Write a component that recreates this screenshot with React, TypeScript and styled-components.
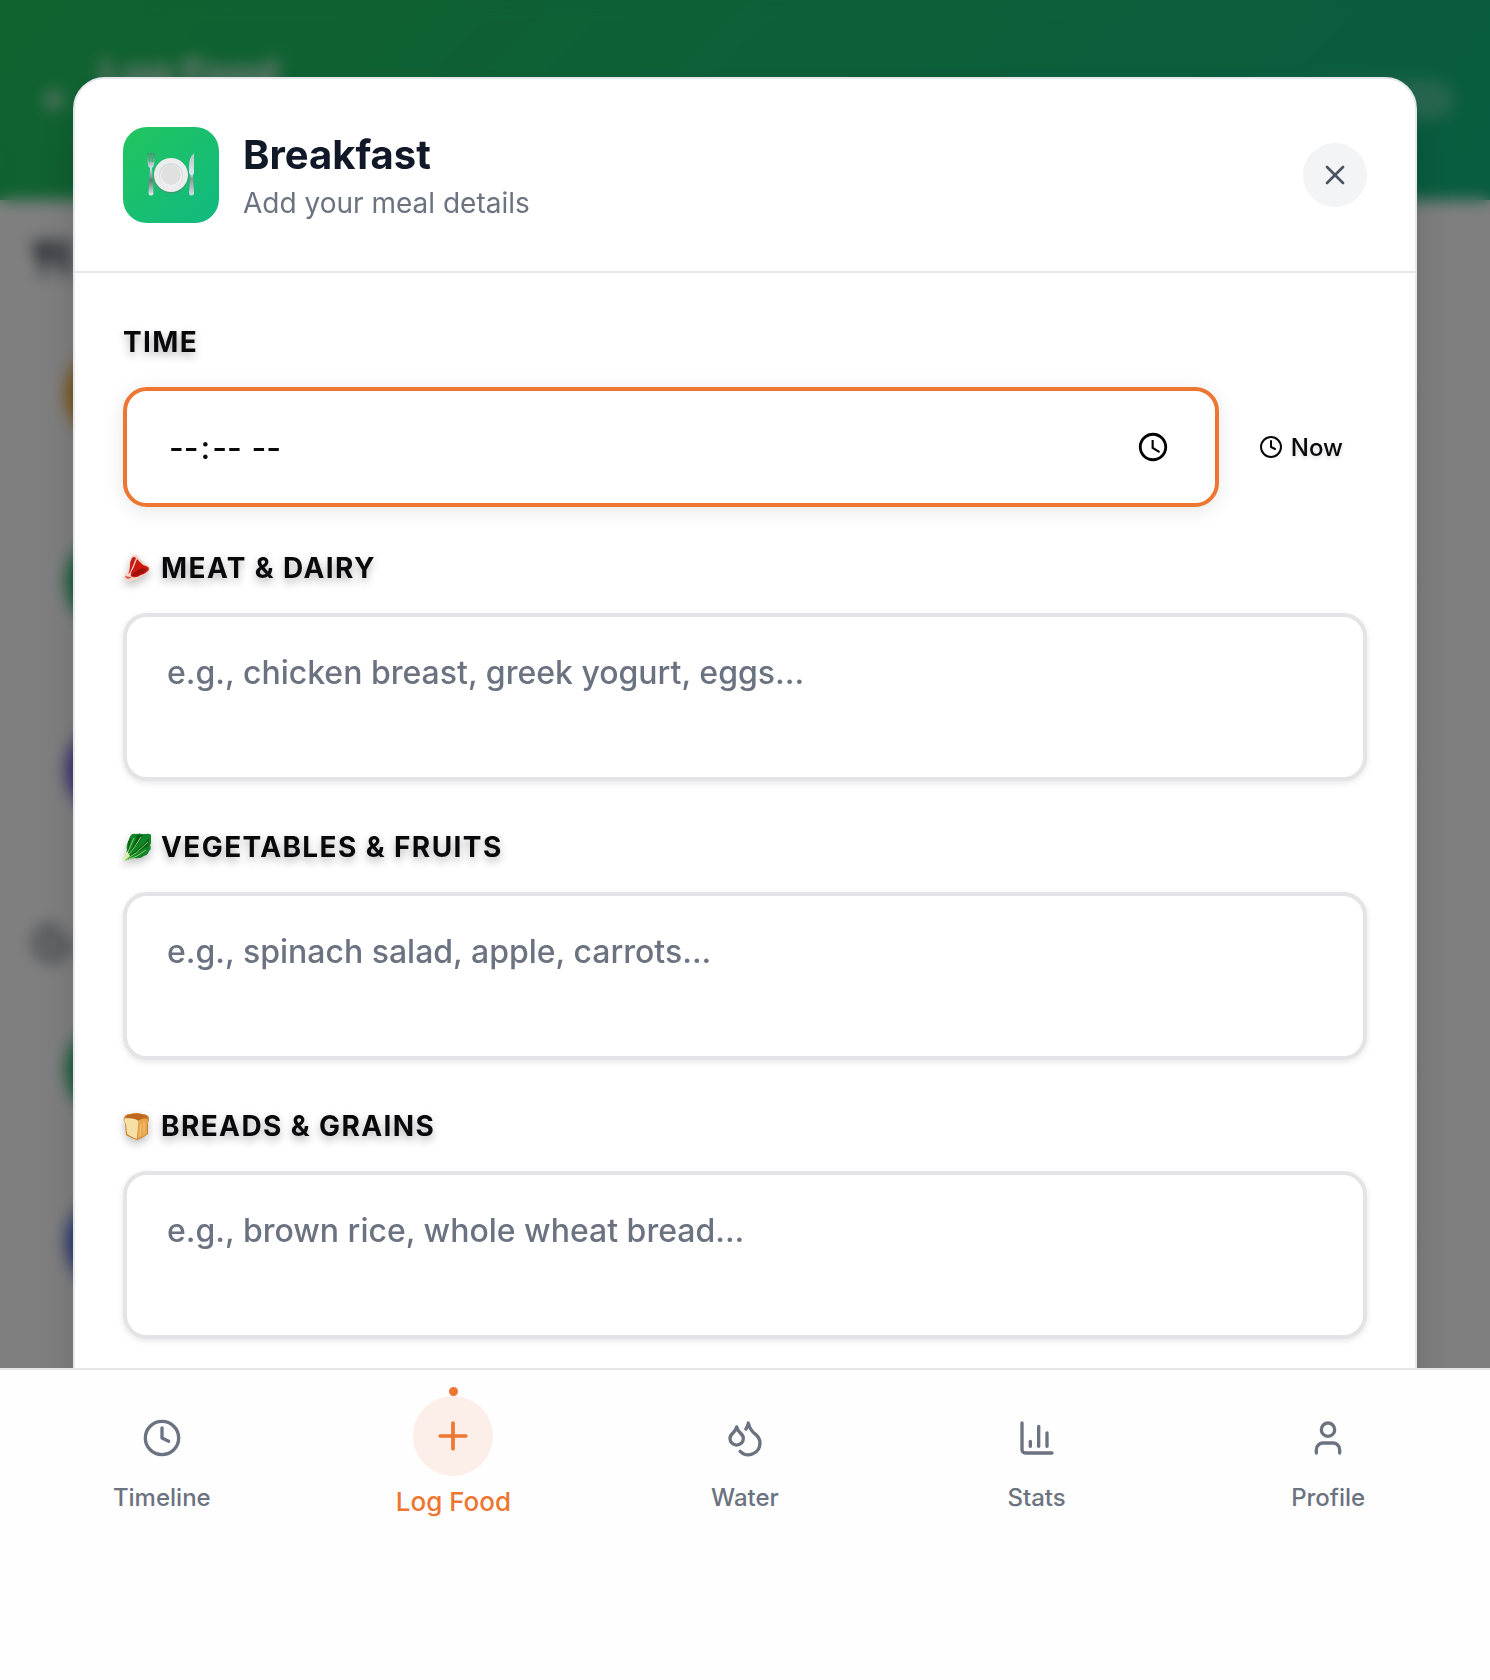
import React from "react";
import styled, { createGlobalStyle } from "styled-components";
import {
  ArrowLeft,
  ChartColumn,
  ChevronRight,
  Clock,
  Cookie,
  Droplets,
  Plus,
  User,
  Utensils,
  X,
} from "lucide-react";

const GlobalStyle = createGlobalStyle`
  *, *::before, *::after { box-sizing: border-box; }
  body {
    margin: 0;
    background: #fff;
    color: #09090b;
    font-family: Inter, "Liberation Sans", sans-serif;
    -webkit-font-smoothing: antialiased;
  }
  button, input, textarea { font: inherit; color: inherit; }
  h1, h2, p { margin: 0; }
`;

/* ---------- page behind the dialog ---------- */

const Page = styled.div`
  height: 100vh;
  overflow: hidden;
`;

const PageHeader = styled.header`
  display: flex;
  align-items: center;
  gap: 28px;
  height: 200px;
  padding: 0 36px 0 40px;
  color: #fff;
  background: linear-gradient(135deg, #22c55e, #10b981);
`;

const PageTitle = styled.div`
  flex: 1;
  padding-bottom: 52px;
  font-size: 40px;
  font-weight: 700;
  line-height: 48px;
`;

const HeaderPill = styled.div`
  width: 144px;
  height: 40px;
  border-radius: 20px;
  background: rgba(255, 255, 255, 0.25);
`;

const PageSection = styled.section<{ $top: number }>`
  display: flex;
  flex-direction: column;
  gap: 16px;
  padding: ${(p) => p.$top}px 32px 0;
`;

const SectionTitle = styled.div<{ $color: string }>`
  display: flex;
  align-items: center;
  height: 50px;
  margin-bottom: 8px;
  color: ${(p) => p.$color};
`;

const EntryCard = styled.div<{ $height: number }>`
  display: flex;
  align-items: center;
  justify-content: space-between;
  height: ${(p) => p.$height}px;
  padding: 0 32px;
  border: 2px solid #f8f8f9;
  border-radius: 32px;
  color: #9ca3af;
`;

const EntryDot = styled.div<{ $color: string }>`
  width: 96px;
  height: 96px;
  border-radius: 50%;
  background: ${(p) => p.$color};
`;

/* ---------- dialog ---------- */

const Overlay = styled.div`
  position: fixed;
  inset: 0;
  display: flex;
  justify-content: center;
  padding: 77px 32px;
  background: rgba(0, 0, 0, 0.5);
  backdrop-filter: blur(8px);
`;

const Dialog = styled.div`
  width: 100%;
  max-width: 1344px;
  overflow: hidden;
  background: #fff;
  border: 2px solid #e5e7eb;
  border-radius: 32px;
  box-shadow: 0 25px 50px -12px rgba(0, 0, 0, 0.25);
`;

const DialogHeader = styled.div`
  display: flex;
  align-items: center;
  gap: 24px;
  padding: 48px;
  border-bottom: 2px solid #e5e7eb;
`;

const MealBadge = styled.div`
  display: grid;
  place-items: center;
  width: 96px;
  height: 96px;
  border-radius: 24px;
  background: linear-gradient(135deg, #22c55e, #10b981);
`;

const Heading = styled.div`
  flex: 1;
`;

const Title = styled.h1`
  font-size: 40px;
  font-weight: 700;
  line-height: 56px;
  color: #111827;
`;

const Subtitle = styled.p`
  font-size: 28px;
  line-height: 40px;
  color: #6b7280;
`;

const CloseButton = styled.button`
  display: grid;
  place-items: center;
  width: 64px;
  height: 64px;
  padding: 0;
  border: 0;
  border-radius: 50%;
  background: #f3f4f6;
  color: #4b5563;
`;

const Form = styled.form`
  display: flex;
  flex-direction: column;
  gap: 40px;
  padding: 48px;
`;

const Field = styled.div<{ $multiline?: boolean }>`
  display: flex;
  flex-direction: column;
  gap: 24px;
  padding-bottom: ${(p) => (p.$multiline ? 5 : 0)}px;
`;

const Label = styled.label`
  display: flex;
  align-items: center;
  gap: 10px;
  font-size: 28px;
  font-weight: 700;
  line-height: 42px;
  letter-spacing: 0.05em;
  text-transform: uppercase;
  text-shadow: 0 4px 8px rgba(0, 0, 0, 0.3);
  svg {
    filter: drop-shadow(0 4px 4px rgba(0, 0, 0, 0.25));
  }
`;

const TimeRow = styled.div`
  display: flex;
  align-items: center;
  gap: 16px;
`;

const TimeInput = styled.input`
  flex: 1;
  min-width: 0;
  height: 120px;
  padding: 0 40px;
  border: 4px solid #ed7632;
  border-radius: 24px;
  outline: 0;
  background: #fff;
  font-size: 32px;
  font-weight: 500;
  box-shadow: 0 4px 20px rgba(0, 0, 0, 0.1);
  &::-webkit-datetime-edit-hour-field,
  &::-webkit-datetime-edit-minute-field,
  &::-webkit-datetime-edit-ampm-field {
    padding: 0 2px;
  }
  &::-webkit-calendar-picker-indicator {
    margin-right: 2px;
  }
`;

const NowButton = styled.button`
  display: flex;
  align-items: center;
  gap: 8px;
  height: 64px;
  padding: 0 24px;
  border: 0;
  background: transparent;
  font-size: 24px;
  font-weight: 500;
  text-shadow: 0 2px 4px rgba(0, 0, 0, 0.15);
`;

const TextArea = styled.textarea`
  display: block;
  width: 100%;
  height: 168px;
  padding: 32px 40px;
  border: 4px solid #e4e4e7;
  border-radius: 24px;
  outline: 0;
  resize: none;
  background: #fff;
  font-size: 32px;
  font-weight: 500;
  line-height: 48px;
  box-shadow: 0 2px 6px rgba(0, 0, 0, 0.1);
  &::placeholder {
    color: #6b7280;
    opacity: 1;
  }
`;

/* ---------- bottom navigation ---------- */

const NavBar = styled.nav`
  position: fixed;
  inset: auto 0 0;
  display: flex;
  padding: 24px 16px 158px;
  border-top: 2px solid #e5e7eb;
  background: #fefefe;
`;

const NavItem = styled.a<{ $active?: boolean }>`
  flex: 1;
  display: flex;
  flex-direction: column;
  align-items: center;
  justify-content: center;
  gap: 8px;
  height: 128px;
  font-size: ${(p) => (p.$active ? 26 : 24)}px;
  line-height: ${(p) => (p.$active ? 36 : 32)}px;
  font-weight: 500;
  color: ${(p) => (p.$active ? "#ed7632" : "#6b7280")};
  text-decoration: none;
`;

const NavIcon = styled.span<{ $active?: boolean }>`
  position: relative;
  display: grid;
  place-items: center;
  width: ${(p) => (p.$active ? 80 : 72)}px;
  height: ${(p) => (p.$active ? 80 : 72)}px;
  border-radius: 50%;
  background: ${(p) => (p.$active ? "#fceee8" : "transparent")};
`;

const ActiveDot = styled.span`
  position: absolute;
  inset: -9px 0 auto;
  width: 9px;
  height: 9px;
  margin: 0 auto;
  border-radius: 50%;
  background: #ed7632;
`;

/* ---------- food drawings ---------- */

const PlateIcon = () => (
  <svg width="48" height="48" viewBox="0 0 48 48" aria-hidden="true">
    <defs>
      <linearGradient id="metal" x1="0" y1="0" x2="0" y2="1">
        <stop offset="0" stopColor="#5c6f66" />
        <stop offset="0.35" stopColor="#cfe0f4" />
        <stop offset="0.65" stopColor="#6d7474" />
        <stop offset="1" stopColor="#e3ebf8" />
      </linearGradient>
      <linearGradient id="blade" x1="0" y1="0" x2="0" y2="1">
        <stop offset="0" stopColor="#b9c6c4" />
        <stop offset="0.5" stopColor="#dbe6f4" />
        <stop offset="0.6" stopColor="#8b9696" />
        <stop offset="1" stopColor="#d5deea" />
      </linearGradient>
    </defs>
    <path
      d="M0.500 2v9q0 4 2.500 6L1.500 42q0 2.500 2.500 2.500T6.500 42L5 17q2.500-2 2.500-6V2H6.300v9H4.600V2H3.400v9H1.700V2z"
      fill="url(#metal)"
    />
    <path d="M47 2q-5 5-5 13v7l1.500 2L42 42q0 2.500 2.500 2.500T47 42l-1-18 1-2z" fill="url(#blade)" />
    <circle cx="24" cy="25" r="17.500" fill="#5f7a6d" opacity="0.5" />
    <circle cx="24" cy="24" r="17" fill="#ececec" />
    <circle cx="24" cy="24" r="12" fill="#d9dcdf" />
    <circle cx="24" cy="25" r="11" fill="#eef2f7" />
    <circle cx="24" cy="24" r="10" fill="#e0e0df" />
  </svg>
);

const MeatIcon = () => (
  <svg width="28" height="28" viewBox="0 0 28 28" aria-hidden="true">
    <path
      d="M9 2q2-2 5-1l3 4q2 2 5 5 5 2 5 5-1 5-8 7-5 5-12 5-6 0-6-4 0-3 4-5 2-4 1-8Q7 5 9 2z"
      fill="#f4d3c9"
    />
    <path
      d="M9 4q2-2 4 0L9 14q-1 4-4 6 2-3 2-8Q7 7 9 4z"
      fill="#c81a12"
    />
    <path
      d="M14 5l3 3q2 3 6 4 3 1 3 3-2 4-8 6-6 4-10 1-1-3 2-7 2-5 4-10z"
      fill="#cb1810"
    />
    <path d="M10 19q3 0 5-3 4-3 9-1-2 4-7 5-4 3-8 2z" fill="#a10f0a" />
    <path d="M2 22q4 1 7 1-3 3-6 1z" fill="#d8574a" />
  </svg>
);

const LeafIcon = () => (
  <svg width="28" height="28" viewBox="0 0 28 28" aria-hidden="true">
    <path
      d="M8 2q2-2 5-1 4-1 6 0h4q3-1 5 1 1 2 0 5 1 3-1 5 2 4-1 6-1 4-5 5-4 3-9 2-4 0-8 2-2 1-3-1 2-5 3-9-1-5 1-8 1-4 3-7z"
      fill="#118429"
    />
    <path d="M8 4q-1 8-4 17 2-9 1-12zM14 2q-2 9-9 20Q15 13 20 2zM26 5Q19 14 6 23q10-4 19-10z" fill="#045f18" />
    <path
      d="M1 27Q6 17 11 5M2 26Q12 15 18 4M2 27q12-6 23-18M3 27q12-3 20-10"
      fill="none"
      stroke="#8fce5f"
      strokeWidth="1"
    />
    <path d="M0 27q2-5 4-9l3 5q-3 2-6 5z" fill="#dceeb0" />
  </svg>
);

const BreadIcon = () => (
  <svg width="28" height="28" viewBox="0 0 28 28" aria-hidden="true">
    <path
      d="M1 6q1-4 6-4 7-2 12 0 6 0 7 4 0 3-1 5v11q-5 4-11 6-6-2-11-5L2 11Q0 9 1 6z"
      fill="#cf7d2a"
    />
    <path d="M16 8q5-2 8-1 2 3 0 6v9q-4 3-9 5l-1-14q0-4 2-5z" fill="#e6a64c" />
    <path d="M2 6q6-1 10 1 4 1 3 5l-1 15q-6-2-10-5L3 12Q0 9 2 6z" fill="#f7e0a6" />
    <path d="M18 12l-1 12M21 10v11" stroke="#f2c878" strokeWidth="1" />
    <path d="M2 6q2-4 10-4 9 0 13 3-5 0-9 3-6-2-14-2z" fill="#bd6722" />
  </svg>
);

const foodFields = [
  { id: "meat", label: "Meat & Dairy", Icon: MeatIcon, hint: "e.g., chicken breast, greek yogurt, eggs..." },
  { id: "vegetables", label: "Vegetables & Fruits", Icon: LeafIcon, hint: "e.g., spinach salad, apple, carrots..." },
  { id: "breads", label: "Breads & Grains", Icon: BreadIcon, hint: "e.g., brown rice, whole wheat bread..." },
];

const navItems = [
  { label: "Timeline", Icon: Clock },
  { label: "Log Food", Icon: Plus, active: true },
  { label: "Water", Icon: Droplets },
  { label: "Stats", Icon: ChartColumn },
  { label: "Profile", Icon: User },
];

const mealColors = ["#f5a524", "#22b568", "#7357dc"];
const snackColors = ["#22b568", "#4a6ad8"];

export default function App() {
  return (
    <>
      <GlobalStyle />
      <Page aria-hidden="true">
        <PageHeader>
          <ArrowLeft size={32} strokeWidth={3} />
          <PageTitle>Log Food</PageTitle>
          <HeaderPill />
        </PageHeader>
        <PageSection $top={34}>
          <SectionTitle $color="#374151">
            <Utensils size={40} strokeWidth={3} />
          </SectionTitle>
          {mealColors.map((color) => (
            <EntryCard key={color} $height={172}>
              <EntryDot $color={color} />
              <ChevronRight size={40} />
            </EntryCard>
          ))}
        </PageSection>
        <PageSection $top={62}>
          <SectionTitle $color="#6b7280">
            <Cookie size={40} strokeWidth={3} />
          </SectionTitle>
          {snackColors.map((color) => (
            <EntryCard key={color} $height={156}>
              <EntryDot $color={color} />
              <ChevronRight size={40} />
            </EntryCard>
          ))}
        </PageSection>
      </Page>

      <Overlay>
        <Dialog role="dialog" aria-modal="true" aria-labelledby="meal-title">
          <DialogHeader>
            <MealBadge>
              <PlateIcon />
            </MealBadge>
            <Heading>
              <Title id="meal-title">Breakfast</Title>
              <Subtitle>Add your meal details</Subtitle>
            </Heading>
            <CloseButton type="button" aria-label="Close">
              <X size={32} />
            </CloseButton>
          </DialogHeader>
          <Form>
            <Field>
              <Label htmlFor="time">Time</Label>
              <TimeRow>
                <TimeInput id="time" type="time" />
                <NowButton type="button">
                  <Clock size={24} />
                  Now
                </NowButton>
              </TimeRow>
            </Field>
            {foodFields.map(({ id, label, Icon, hint }) => (
              <Field key={id} $multiline>
                <Label htmlFor={id}>
                  <Icon />
                  {label}
                </Label>
                <TextArea id={id} placeholder={hint} />
              </Field>
            ))}
          </Form>
        </Dialog>
      </Overlay>

      <NavBar aria-label="Main">
        {navItems.map(({ label, Icon, active }) => (
          <NavItem key={label} href="#" $active={active} aria-current={active ? "page" : undefined}>
            <NavIcon $active={active}>
              {active && <ActiveDot />}
              <Icon size={active ? 44 : 40} />
            </NavIcon>
            {label}
          </NavItem>
        ))}
      </NavBar>
    </>
  );
}
